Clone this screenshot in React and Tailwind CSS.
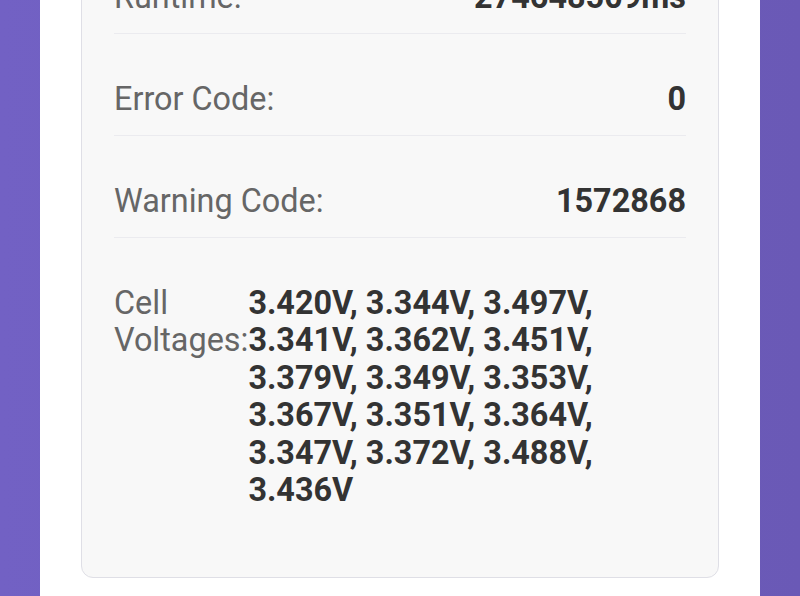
const rows = [
  { label: 'Runtime:', value: '274648509ms' },
  { label: 'Error Code:', value: '0' },
  { label: 'Warning Code:', value: '1572868' },
]

const cells = [
  '3.420', '3.344', '3.497', '3.341', '3.362', '3.451', '3.379', '3.349',
  '3.353', '3.367', '3.351', '3.364', '3.347', '3.372', '3.488', '3.436',
]

function Row({ label, value, last }) {
  return (
    <div
      className={`flex items-start justify-between pt-[46.5px] pb-[17px] ${last ? '' : 'border-b border-[#ebebef]'}`}
    >
      <span className="text-[#666666]">{label}</span>
      <span className="font-bold text-[#333333]">{value}</span>
    </div>
  )
}

export default function App() {
  return (
    <div className="min-h-screen flex bg-gradient-to-r from-[#7261c4] to-[#6a59b6] px-10 overflow-hidden">
      <div className="flex-1 bg-white px-[41px]">
        <div
          className="-mt-[69px] rounded-b-xl border border-[#dfdfe6] bg-[#f8f8f8] px-8 pb-[50px] text-[32.4px] leading-[37.5px]"
          style={{ fontFamily: 'Roboto, "Noto Sans", sans-serif' }}
        >
          {rows.map(r => <Row key={r.label} {...r} />)}
          <Row label="Cell Voltages:" value={cells.map(v => v + 'V').join(', ')} last />
        </div>
      </div>
    </div>
  )
}
